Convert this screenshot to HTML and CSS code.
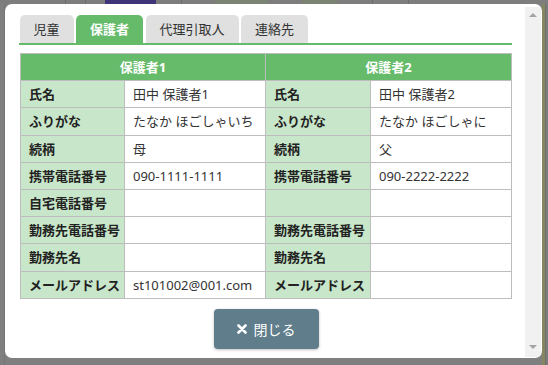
FILE: index.html
```html
<!DOCTYPE html>
<html lang="ja">
<head>
<meta charset="utf-8">
<link rel="stylesheet" href="styles.css">
</head>
<body>
<div class="page">
  <div class="backdrop-top">
    <span class="bl l1"></span><span class="bl l2"></span><span class="purple"></span><span class="bl l3"></span><span class="greenish g1"></span><span class="greenish g2"></span><span class="bl l4"></span><span class="bl l5"></span>
  </div>
  <div class="row">
    <div class="edge-left"></div>
    <div class="modal">
      <div class="content">
        <div class="tabs">
          <div class="tab">児童</div>
          <div class="tab active">保護者</div>
          <div class="tab">代理引取人</div>
          <div class="tab">連絡先</div>
        </div>
        <table class="grid">
          <colgroup><col class="c1"><col class="c2"><col class="c3"><col class="c4"></colgroup>
          <thead>
            <tr><th colspan="2">保護者1</th><th colspan="2">保護者2</th></tr>
          </thead>
          <tbody>
            <tr><td class="lb">氏名</td><td>田中 保護者1</td><td class="lb">氏名</td><td>田中 保護者2</td></tr>
            <tr><td class="lb">ふりがな</td><td>たなか ほごしゃいち</td><td class="lb">ふりがな</td><td>たなか ほごしゃに</td></tr>
            <tr><td class="lb">続柄</td><td>母</td><td class="lb">続柄</td><td>父</td></tr>
            <tr><td class="lb">携帯電話番号</td><td>090-1111-1111</td><td class="lb">携帯電話番号</td><td>090-2222-2222</td></tr>
            <tr><td class="lb">自宅電話番号</td><td></td><td class="lb"></td><td></td></tr>
            <tr><td class="lb">勤務先電話番号</td><td></td><td class="lb">勤務先電話番号</td><td></td></tr>
            <tr><td class="lb">勤務先名</td><td></td><td class="lb">勤務先名</td><td></td></tr>
            <tr><td class="lb">メールアドレス</td><td>st101002@001.com</td><td class="lb">メールアドレス</td><td></td></tr>
          </tbody>
        </table>
        <div class="actions">
          <button class="close-btn" type="button">
            <svg class="x-icon" viewBox="0 0 10 10" width="10" height="10" aria-hidden="true"><path d="M1.5 1.5 L8.5 8.5 M8.5 1.5 L1.5 8.5" stroke="#fff" stroke-width="2.6" stroke-linecap="round"/></svg>
            <span>閉じる</span>
          </button>
        </div>
      </div>
      <div class="scrollbar">
        <span class="arrow up"></span>
        <span class="arrow down"></span>
      </div>
    </div>
    <div class="edge-right"></div>
  </div>
</div>
</body>
</html>
```

FILE: styles.css
```css
* { box-sizing: border-box; }
html, body { margin: 0; padding: 0; }
body {
  width: 548px;
  height: 365px;
  overflow: hidden;
  background: #7f7f7f;
  font-family: "Noto Sans", "Noto Sans CJK JP", sans-serif;
  font-size: 13px;
  color: #333;
}
.page { display: flex; flex-direction: column; }
.backdrop-top {
  height: 4px;
  display: flex;
  background: #7d7d7d;
}
.bl { width: 1px; background: #6c6c6c; }
.l1 { margin-left: 65px; }
.l2 { margin-left: 19px; }
.purple { width: 51px; margin-left: 19px; background: #3f3478; }
.l3 { margin-left: 25px; }
.greenish { background: #7b8473; }
.g1 { width: 52px; margin-left: 33px; }
.g2 { width: 35px; margin-left: 35px; }
.l4 { margin-left: 35px; }
.l5 { margin-left: 35px; }
.row { display: flex; height: 361px; }
.edge-left { width: 5px; border-right: 1px solid #757575; }
.edge-right { width: 6px; background: linear-gradient(90deg, #86865f 0 3px, #6f6f6f 3px 4px, #7d7d7d 4px); }
.modal {
  width: 537px;
  height: 354px;
  background: #fff;
  border-radius: 7px;
  display: flex;
  overflow: hidden;
}
.content {
  flex: 1;
  padding: 11px 13px 0 14px;
}
.tabs {
  display: flex;
  gap: 2.5px;
  border-bottom: 2px solid #66bb6a;
  padding-left: 0.5px;
}
.tab {
  height: 28px;
  line-height: 28px;
  padding: 0 14px;
  background: #e0e0e0;
  border-radius: 5px 5px 0 0;
  color: #333;
  font-size: 13px;
}
.tab.active {
  background: #66bb6a;
  color: #fff;
  font-weight: bold;
}
.grid {
  margin-top: 8px;
  margin-left: 1px;
  width: 491px;
  border-collapse: collapse;
  table-layout: fixed;
}
.c1 { width: 104px; }
.c2 { width: 141px; }
.c3 { width: 105px; }
.c4 { width: 141px; }
.grid th, .grid td {
  border: 1px solid #bdbdbd;
  height: 27.2px;
  padding: 0 8px;
  line-height: 18px;
  white-space: nowrap;
  overflow: hidden;
}
.grid th {
  background: #66bb6a;
  color: #fff;
  font-weight: bold;
  text-align: center;
}
.grid td { color: #333; background: #fff; }
.grid td.lb {
  background: #c8e6c9;
  color: #222;
  font-weight: bold;
}
.actions {
  display: flex;
  justify-content: center;
  margin-top: 10px;
  padding-left: 1px;
}
.close-btn {
  width: 105px;
  height: 40px;
  border: none;
  border-radius: 4px;
  background: #607d8b;
  color: #fff;
  font-family: inherit;
  font-size: 14px;
  display: flex;
  align-items: center;
  justify-content: center;
  gap: 7px;
  box-shadow: 0 1px 3px rgba(0,0,0,0.25);
  padding: 0;
}
.x-icon { display: block; }
.scrollbar {
  width: 17px;
  margin: 3px 1px 1px 0;
  background: #f1f1f1;
  display: flex;
  flex-direction: column;
  justify-content: space-between;
  align-items: center;
  padding: 6px 0 8px;
}
.arrow {
  width: 0; height: 0;
  border-left: 4px solid transparent;
  border-right: 4px solid transparent;
}
.arrow.up { border-bottom: 4px solid #a3a3a3; }
.arrow.down { border-top: 4px solid #a3a3a3; }
```
